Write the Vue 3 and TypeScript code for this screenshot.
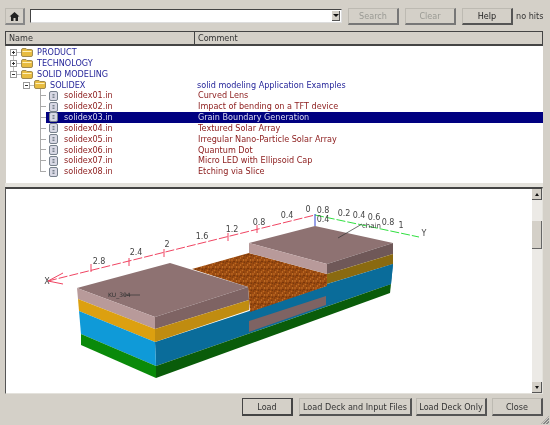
<script setup lang="ts">
/** 树形列表的一行 */
type Row = {
  name: string;
  comment?: string;
  kind: "root" | "sub" | "file";
  open?: boolean;
  selected?: boolean;
};

const rows: Row[] = [
  { name: "PRODUCT", kind: "root" },
  { name: "TECHNOLOGY", kind: "root" },
  { name: "SOLID MODELING", kind: "root", open: true },
  { name: "SOLIDEX", comment: "solid modeling Application Examples", kind: "sub", open: true },
  { name: "solidex01.in", comment: "Curved Lens", kind: "file" },
  { name: "solidex02.in", comment: "Impact of bending on a TFT device", kind: "file" },
  { name: "solidex03.in", comment: "Grain Boundary Generation", kind: "file", selected: true },
  { name: "solidex04.in", comment: "Textured Solar Array", kind: "file" },
  { name: "solidex05.in", comment: "Irregular Nano-Particle Solar Array", kind: "file" },
  { name: "solidex06.in", comment: "Quantum Dot", kind: "file" },
  { name: "solidex07.in", comment: "Micro LED with Ellipsoid Cap", kind: "file" },
  { name: "solidex08.in", comment: "Etching via Slice", kind: "file" },
];

/** 坐标轴刻度文字 */
const labels: [string, number, number][] = [
  ["2.8", 99, 264],
  ["2.4", 136, 255],
  ["2", 167, 247],
  ["1.6", 202, 239],
  ["1.2", 232, 232],
  ["0.8", 259, 225],
  ["0.4", 287, 218],
  ["0", 308, 212],
  ["0.8", 323, 213],
  ["0.4", 323, 222],
  ["0.2", 344, 216],
  ["0.4", 359, 218],
  ["0.6", 374, 220],
  ["0.8", 388, 225],
  ["1", 401, 228],
];

/** 红色坐标轴上的刻度 */
const ticks: [number, number][] = [
  [91, 268],
  [129, 262],
  [164, 253],
  [228, 237],
  [257, 229],
];

/** 三维模型的各个面：颜色 + 顶点 */
const faces: [string, string][] = [
  // 底层与中间层
  ["#0a6c9a", "155,342 393,264 391,284 156,366"],
  ["#0a5c0a", "156,366 391,284 390,293 156,378"],
  ["#7e6363", "249,321 326,296 326,305 249,332"],
  // 右侧方块
  ["#8e7272", "249,243 315,226 393,243 327,264"],
  ["#b89a9a", "249,243 327,264 327,274 249,253"],
  ["#6f5858", "327,264 393,243 393,254 327,274"],
  ["#8a6a10", "327,274 393,254 393,264 327,284"],
  ["#0a6c9a", "327,284 393,264 391,284 327,304"],
  // 左侧方块
  ["#8e7272", "77,288 170,263 248,287 155,317"],
  ["#b89a9a", "77,288 155,317 155,329 78,299"],
  ["#dca010", "78,299 155,329 155,342 79,311"],
  ["#0f9ad8", "79,311 155,342 156,366 81,334"],
  ["#0a8a0a", "81,334 156,366 156,378 81,345"],
  ["#7e6363", "155,317 248,287 249,300 155,329"],
  ["#c08c10", "155,329 249,300 249,310 155,342"],
];
</script>

<template>
  <div class="window">
    <div class="toolbar">
      <button class="btn home">
        <svg width="11" height="11" viewBox="0 0 11 11">
          <path d="M5.5 1 L10.5 5.5 H9 V10 H6.5 V7 H4.5 V10 H2 V5.5 H.5 Z" fill="#222" />
        </svg>
      </button>
      <div class="combo">
        <span class="combo-arrow"></span>
      </div>
      <button class="btn tool" disabled>Search</button>
      <button class="btn tool" disabled>Clear</button>
      <button class="btn tool help">Help</button>
      <span class="hits">no hits</span>
    </div>

    <div class="header">
      <div class="col-name">Name</div>
      <div class="col-comment">Comment</div>
    </div>

    <div class="tree">
      <div v-for="r in rows" :key="r.name" class="row" :class="r.kind">
        <span v-if="r.kind == 'file'" class="elbow"></span>
        <span v-else class="expander">
          <i class="h"></i>
          <i v-if="!r.open" class="v"></i>
        </span>
        <div class="body" :class="{ selected: r.selected }">
          <svg v-if="r.kind == 'file'" class="icon" width="9" height="10" viewBox="0 0 9 10">
            <rect x=".5" y=".5" width="8" height="9" rx="1.5" fill="#d8d8e4" stroke="#77808c" />
            <path d="M3.5 3.5h2M3.5 5h2M3.5 6.5h2" stroke="#77808c" />
          </svg>
          <svg v-else class="icon" width="12" height="9" viewBox="0 0 12 9">
            <path d="M.5 2 Q.5 .5 2 .5 H5 L6 1.5 H10.5 Q11.5 1.5 11.5 3 V7 Q11.5 8.5 10 8.5 H2 Q.5 8.5 .5 7 Z" fill="#e8bc40" stroke="#a08a50" />
            <path d="M1.5 3.5 H10.5" stroke="#fff0b8" />
          </svg>
          <span class="name">{{ r.name }}</span>
          <span class="comment">{{ r.comment }}</span>
        </div>
      </div>
    </div>

    <div class="plot">
      <svg class="scene" width="526" height="204" viewBox="6 189 526 204">
        <defs>
          <pattern id="grain" width="7" height="7" patternUnits="userSpaceOnUse">
            <rect width="7" height="7" fill="#9a4a10" />
            <circle cx="1" cy="1" r=".8" fill="#c87028" />
            <circle cx="3" cy="2.5" r=".8" fill="#6e3008" />
            <circle cx="5.5" cy="1" r=".7" fill="#d08030" />
            <circle cx="1.5" cy="4" r=".7" fill="#7a3a0c" />
            <circle cx="4.5" cy="4.5" r=".8" fill="#c06a20" />
            <circle cx="6.3" cy="3.2" r=".6" fill="#64300a" />
            <circle cx="2.5" cy="6" r=".7" fill="#cc7a2c" />
            <circle cx="5.8" cy="6.2" r=".6" fill="#703408" />
          </pattern>
        </defs>
        <polygon v-for="(f, i) in faces.slice(0, 3)" :key="i" :fill="f[0]" :points="f[1]" />
        <polygon fill="url(#grain)" points="192,269 249,253 327,274 327,286 250,312 248,287" />
        <polygon v-for="(f, i) in faces.slice(3)" :key="i + 3" :fill="f[0]" :points="f[1]" />

        <line x1="48" y1="281" x2="315" y2="215" stroke="#f04462" stroke-width="1" stroke-dasharray="9 2" />
        <path d="M63 273 L48 281 L63 284" fill="none" stroke="#f04462" />
        <line
          v-for="(t, i) in ticks"
          :key="i"
          :x1="t[0]"
          :y1="t[1] - 4"
          :x2="t[0]"
          :y2="t[1] + 4"
          stroke="#f04462"
        />
        <line x1="315" y1="215" x2="419" y2="237" stroke="#30e040" stroke-width="1" stroke-dasharray="9 2" />
        <line x1="315" y1="214" x2="315" y2="226" stroke="#3040d0" />

        <line x1="338" y1="238" x2="362" y2="224" stroke="#333" stroke-width=".7" />
        <line x1="124" y1="295" x2="140" y2="295" stroke="#333" stroke-width=".7" />

        <text v-for="(l, i) in labels" :key="i" class="tick" :x="l[1]" :y="l[2]">{{ l[0] }}</text>
        <text class="tick" x="47" y="284">X</text>
        <text class="tick" x="424" y="236">Y</text>
        <text class="chain" x="362" y="228">chain</text>
        <text class="tag" x="108" y="297">KU_304</text>
      </svg>

      <div class="scrollbar">
        <div class="arrow up"><span></span></div>
        <div class="track">
          <div class="thumb"></div>
        </div>
        <div class="arrow down"><span></span></div>
      </div>
    </div>

    <div class="footer">
      <button class="btn load">Load</button>
      <button class="btn files">Load Deck and Input Files</button>
      <button class="btn only">Load Deck Only</button>
      <button class="btn close">Close</button>
      <span class="grip"></span>
    </div>
  </div>
</template>

<style scoped>
* {
  box-sizing: border-box;
}

.window {
  position: relative;
  width: 550px;
  height: 425px;
  padding: 8px 7px 0 5px;
  background: #d4d0c8;
  font-family: "DejaVu Sans", sans-serif;
  font-size: 8.1px;
  color: #333;
  overflow: hidden;
  filter: blur(0.3px);
}

.btn {
  flex: none;
  height: 17px;
  padding: 0;
  background: #d4d0c8;
  border: 1px solid #9c9a94;
  border-top-color: #bdbab2;
  border-left-color: #bdbab2;
  border-right: 2px solid #555;
  border-bottom: 2px solid #555;
  font: inherit;
  color: #333;
  white-space: nowrap;
}

.btn:disabled {
  color: #9a9a94;
  border-right-color: #777;
  border-bottom-color: #777;
}

.toolbar {
  display: flex;
  align-items: flex-start;
  height: 23px;
}

.home {
  width: 20px;
  display: flex;
  align-items: center;
  justify-content: center;
  margin-right: 5px;
  border-right-color: #888;
  border-bottom-color: #888;
}

.combo {
  position: relative;
  flex: none;
  width: 312px;
  height: 14px;
  margin: 1px 6px 0 0;
  background: #fff;
  border: 1px solid #ddd;
  border-top: 1px solid #444;
  border-left: 1px solid #444;
}

.combo-arrow {
  position: absolute;
  right: 1px;
  top: 1px;
  width: 8px;
  height: 10px;
  background: #d4d0c8;
  border-right: 1px solid #555;
  border-bottom: 1px solid #555;
}

.combo-arrow::after {
  content: "";
  position: absolute;
  left: 1px;
  top: 3px;
  border: 3px solid transparent;
  border-top: 3px solid #111;
  border-bottom: 0;
}

.tool {
  width: 51px;
  margin-right: 6px;
}

.help {
  color: #222;
  margin-right: 3px;
}

.hits {
  line-height: 16px;
  white-space: nowrap;
}

.header {
  display: flex;
  height: 15px;
  line-height: 12px;
  border: 1px solid #444;
  border-bottom-width: 2px;
}

.col-name {
  width: 189px;
  padding-left: 3px;
  border-right: 1px solid #444;
}

.col-comment {
  padding-left: 3px;
}

.tree {
  height: 137px;
  padding-top: 1px;
  margin-left: 1px;
  background: #fff;
  overflow: hidden;
}

.row {
  display: flex;
  height: 10.85px;
  line-height: 10.85px;
}

.root {
  padding-left: 4px;
}

.sub {
  padding-left: 17px;
}

.file {
  padding-left: 34px;
}

.expander {
  position: relative;
  flex: none;
  width: 7px;
  height: 7px;
  margin: 2px 4px 0 0;
  border: 1px solid #999;
  background: #fff;
}

/* 展开符右侧与下方的连接线 */
.expander::before {
  content: "";
  position: absolute;
  left: 6px;
  top: 2px;
  width: 4px;
  height: 1px;
  background: #bbb;
}

.root .expander::after {
  content: "";
  position: absolute;
  left: 2px;
  top: 6px;
  width: 1px;
  height: 4px;
  background: #bbb;
}

.root:nth-child(3) .expander::after {
  display: none;
}

.expander .h {
  position: absolute;
  left: 1px;
  top: 2px;
  width: 3px;
  height: 1px;
  background: #333;
}

.expander .v {
  position: absolute;
  left: 2px;
  top: 1px;
  width: 1px;
  height: 3px;
  background: #333;
}

.elbow {
  flex: none;
  width: 6px;
  height: 10.85px;
  margin-top: -5px;
  border-left: 1px solid #aaa;
  border-bottom: 1px solid #aaa;
}

.body {
  display: flex;
  flex: 1;
  align-items: center;
  min-width: 0;
}

.icon {
  position: relative;
  flex: none;
  margin-right: 5px;
}

.file .icon {
  margin-left: 3px;
  margin-right: 6px;
}

.root .icon,
.sub .icon {
  margin-right: 4px;
}

.name {
  flex: none;
  white-space: nowrap;
}

.root .name {
  width: 161px;
  color: #26269a;
}

.sub .name {
  width: 147px;
  color: #26269a;
}

.file .name {
  width: 134px;
  color: #8e2020;
}

.comment {
  white-space: nowrap;
}

.sub .comment {
  color: #26269a;
}

.file .comment {
  color: #8e2020;
}

.selected {
  background: #000080;
}

.selected .name,
.selected .comment {
  color: #dcdcf0;
}

.plot {
  display: flex;
  height: 207px;
  margin-top: 4px;
  background: #fff;
  border-top: 2px solid #444;
  border-left: 1px solid #555;
  border-bottom: 1px solid #e4e2dc;
  border-right: 1px solid #e4e2dc;
  box-shadow: 0 -4px 0 #e4e2dc;
}

.scene {
  display: block;
  flex: none;
}

.tick {
  font-size: 8px;
  fill: #444;
  text-anchor: middle;
}

.chain {
  font-size: 7px;
  fill: #444;
}

.tag {
  font-size: 6px;
  fill: #333;
}

.scrollbar {
  display: flex;
  flex: 1;
  flex-direction: column;
  background: #eceae6;
}

.arrow {
  position: relative;
  height: 11px;
  background: #d4d0c8;
  border-right: 1px solid #555;
  border-bottom: 1px solid #555;
}

.arrow span {
  position: absolute;
  left: 3px;
  top: 4px;
  border: 2.5px solid transparent;
}

.up span {
  top: 2px;
  border-bottom: 3px solid #111;
}

.down span {
  top: 4px;
  border-top: 3px solid #111;
}

.track {
  flex: 1;
  padding-top: 21px;
}

.thumb {
  height: 28px;
  background: #d4d0c8;
  border-right: 1px solid #666;
  border-bottom: 1px solid #666;
}

.footer {
  display: flex;
  justify-content: flex-end;
  margin-top: 4px;
}

.footer .btn {
  height: 18px;
}

.load {
  width: 51px;
  margin-right: 6px;
  border-color: #444;
}

.files {
  width: 113px;
  margin-right: 4px;
}

.only {
  width: 71px;
  margin-right: 5px;
}

.close {
  width: 51px;
}

.grip {
  position: absolute;
  right: 1px;
  bottom: 1px;
  width: 8px;
  height: 8px;
  background: repeating-linear-gradient(135deg, #d4d0c8 0 1px, #888 1px 2px);
  clip-path: polygon(100% 0, 100% 100%, 0 100%);
}
</style>
